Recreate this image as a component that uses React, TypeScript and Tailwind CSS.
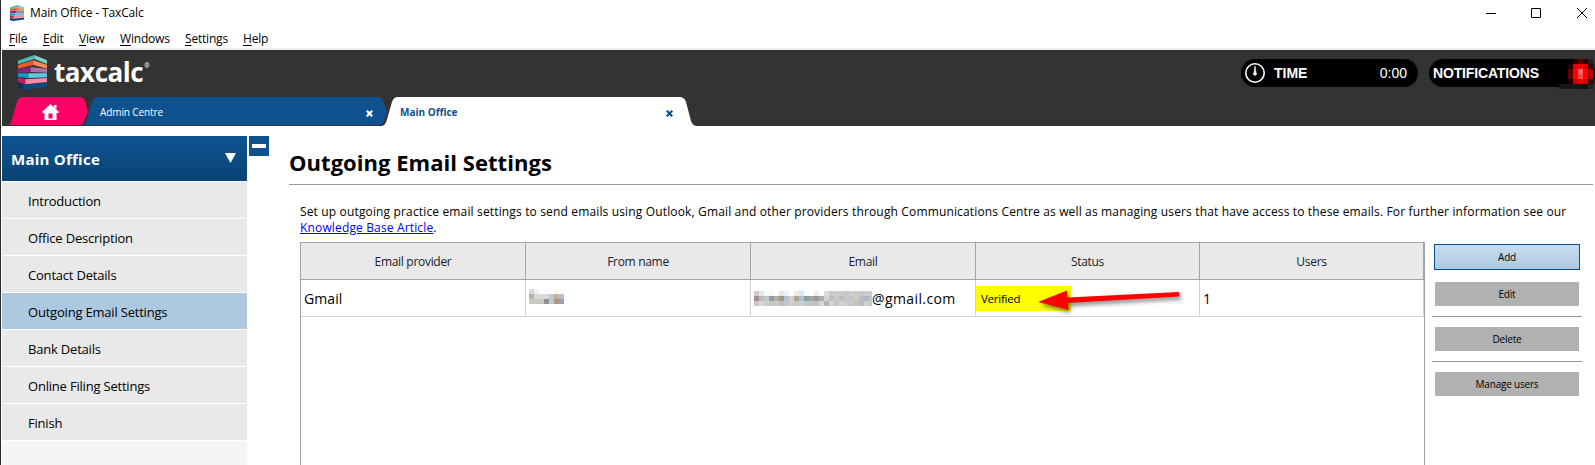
import clsx from "clsx";

const menuItems = [
  { label: "File", className: "w-[34px]" },
  { label: "Edit", className: "w-[36px]" },
  { label: "View", className: "w-[41px]" },
  { label: "Windows", className: "w-[65px]" },
  { label: "Settings", className: "w-[58px]" },
  { label: "Help", className: "w-[40px]" },
];

const sidebarItems = [
  "Introduction",
  "Office Description",
  "Contact Details",
  "Outgoing Email Settings",
  "Bank Details",
  "Online Filing Settings",
  "Finish",
];

const columns = ["Email provider", "From name", "Email", "Status", "Users"];

// each string is one row of 5px squares, colours separated by spaces
const nameMosaic = [
  "#dcdad6 #eef0f4 #ffffff #ffffff #ffffff #f8f6f2 #f8fbff #ffffff",
  "#b4b2a8 #d8d8d4 #dcdae0 #d8dade #c4cacc #c2b2a2 #b4c2d0 #ffffff",
  "#cbcbc5 #c8c8c4 #d2c4c2 #87929a #c8c6c0 #ae9686 #97a3b3 #f8fcff",
];

const emailMosaic = [
  "#d6c8ca #dde9f0 #fafafa #f8fafa #ffffff #f0e2dc #e4f2fc #ffffff #f6e8da #d4e8f6 #fafafa #ffffff #eeeeee #ffffff #d8dce0 #c9c9cb #d0ccc8 #c8cacc #c6c4c4 #d0cec8 #c8ccce #cac6c6 #cccccc #c8cacc",
  "#a88c90 #b4bebc #c6c8ca #929aa0 #b0aea8 #a89482 #b0c0cc #d8ccc8 #a8a898 #b0c0cc #8e9ca4 #a8a6a8 #9a9a98 #b0a8a0 #d4d4d4 #c4c0bc #c6c8cc #c0bcb8 #c8c4c8 #c0c4c8 #ccc8c4 #b8bcc4 #a8b8c8 #c4c8cc",
  "#d0c4c4 #d8d8d4 #cccfcd #c4c4c0 #c8c8ca #c4beb8 #c0c8cc #d8ccca #c8c8c0 #ccd0d4 #c0c8cc #c4c4c8 #c0c0c0 #d8d4d0 #b4b4b4 #d0d4d8 #c8c4c0 #d4d0cc #c8ccd0 #ccc8c4 #c4c0bc #b8bcc0 #d0d0cc #c4c8cc",
];

const lampMosaic = [
  "#000000 #2b0000 #5c0000 #2b0000 #202020 #333333",
  "#1c0000 #e80000 #f40000 #e80000 #3a0000 #222222",
  "#5a0000 #ff0000 #ff6666 #ff0000 #b80000 #000000",
  "#600000 #ff0000 #f84848 #ff0000 #b00000 #000000",
  "#200000 #d00000 #f00000 #d00000 #400000 #222222",
  "#171717 #171717 #171717 #101010 #222222 #333333",
];

const Mosaic = ({ rows }: { rows: string[] }) => (
  <svg
    width={rows[0].split(" ").length * 5}
    height={rows.length * 5}
    shapeRendering="crispEdges"
    className="shrink-0"
  >
    {rows.map((row, y) =>
      row.split(" ").map((fill, x) => <rect key={`${x}-${y}`} x={x * 5} y={y * 5} width={5} height={5} fill={fill} />)
    )}
  </svg>
);

const Logo = ({ className }: { className?: string }) => (
  <svg viewBox="0 0 87 105" preserveAspectRatio="none" className={className}>
    <path d="M0 17 49 0 87 16V95L16 105 0 98Z" fill="#333" fillOpacity=".35" />
    <path d="M0 17 49 0V12L0 28Z" fill="#4cbcb4" />
    <path d="M49 0 87 16V27L49 12Z" fill="#7fd3ca" />
    <path d="M0 30 46 16V30L0 41Z" fill="#f0592b" />
    <path d="M46 16 87 29V41L46 30Z" fill="#f58a5b" />
    <path d="M0 43 38 36V51L0 53Z" fill="#8a2180" />
    <path d="M38 36 87 42V53L38 51Z" fill="#b070ac" />
    <path d="M0 55 31 55V69L0 66Z" fill="#0d9bc9" />
    <path d="M31 55 87 55V67L31 69Z" fill="#5fc6e4" />
    <path d="M0 68 22 73V88L0 80Z" fill="#c8185f" />
    <path d="M22 73 87 69V81L22 88Z" fill="#f28ba5" />
    <path d="M0 82 16 90V105L0 98Z" fill="#10305c" />
    <path d="M16 90 87 83V95L16 105Z" fill="#0c4a80" />
  </svg>
);

const WindowControls = () => (
  <svg width="103" height="12" fill="none" stroke="#000" className="mr-[6px]">
    <path d="M0 6.5H10M45.5 1.5H54.5V10.5H45.5Z" />
    <path d="M91 1 101 11M101 1 91 11" />
  </svg>
);

const TitleBar = () => (
  <div className="flex h-[25px] items-center pl-2">
    <Logo className="h-4 w-[14px]" />
    <span className="ml-[6px] text-[12px] tracking-[-0.14px]">Main Office - TaxCalc</span>
    <div className="flex-1" />
    <WindowControls />
  </div>
);

const MenuBar = () => (
  <div className="flex h-[25px] items-center border-b-2 border-[#f0f0f0] pl-[7px] pt-[4px] text-[12px] tracking-[-0.2px]">
    {menuItems.map(({ label, className }) => (
      <span key={label} className={clsx("whitespace-nowrap", className)}>
        <span className="underline underline-offset-2">{label[0]}</span>
        {label.slice(1)}
      </span>
    ))}
  </div>
);

const CloseIcon = () => (
  <svg width="7" height="7" stroke="currentColor" strokeWidth="2.2" className="shrink-0">
    <path d="M0.7 0.7 6.3 6.3M6.3 0.7 0.7 6.3" />
  </svg>
);

const Tabs = () => (
  <div className="flex h-[29px] pl-2 text-[10px]">
    <div className="relative h-7 w-[77px]">
      <svg width="80" height="28" className="absolute left-[-2px] top-0">
        <path
          d="M0 28C2 27.500 3 26 3.500 24L9 5C10 1.500 12 0 15 0H71C75 0 76.500 2 77.500 5L80 15 76.500 24C75.500 27 73 28 70 28Z"
          fill="#ff0066"
        />
        <path
          d="M42.500 7 51 15 49.500 16.500 48.500 15.700V23H36.500V15.700L35.500 16.500 34 15ZM46 8H48.500V12L46 10Z"
          fill="#fff"
        />
        <path d="M40.500 16.500H44.500V21.500H40.500Z" fill="#ff0066" />
      </svg>
    </div>
    <div className="relative flex h-7 w-[299px] items-center text-white">
      <svg width="305" height="28" className="absolute left-[-5px] top-0">
        <path
          d="M0 28C3 27 4 25 5 22L10 5C11 1.500 13 0 16 0H295C299 0 300.500 2 301.500 5L305 15 302 24C301 27 299 28 296 28Z"
          fill="#0d518e"
        />
      </svg>
      <span className="relative ml-[13px] flex-1 pt-[3px] tracking-[-0.1px]">Admin Centre</span>
      <span className="relative mr-[13px] pt-[5px]">
        <CloseIcon />
      </span>
    </div>
    <div className="relative flex h-[29px] w-[311px] items-center font-bold text-[#0d518e]">
      <svg width="319" height="29" className="absolute left-[-6px] top-0">
        <path
          d="M0 29C4 29 5.500 27 6.500 24L12 5C13 1.500 15 0 18 0H299C303 0 305 2 306 5L311 24C312 27 314 29 318 29Z"
          fill="#fff"
        />
      </svg>
      <span className="relative ml-[14px] flex-1 pt-[2px]">Main Office</span>
      <span className="relative mr-[24px] pt-[4px]">
        <CloseIcon />
      </span>
    </div>
  </div>
);

const Header = () => (
  <header className="flex h-[76px] flex-col justify-between bg-[#333333]">
    <div className="flex h-[47px] text-white">
      <div className="flex pl-4 pt-[5px]">
        <Logo className="h-[35px] w-[29px]" />
        <span className="ml-[7px] mt-[2px] w-[90px] text-[26px] font-bold leading-[30px] tracking-[-0.45px]">
          taxcalc
        </span>
        <span className="mt-[7px] text-[7px] leading-[8px]">®</span>
      </div>
      <div className="flex-1" />
      <div className="flex pt-[9px] font-['Liberation_Sans',sans-serif] text-[14px] leading-7">
        <div className="flex h-7 w-[177px] items-center rounded-full bg-black pl-1">
          <svg width="20" height="20" fill="none" stroke="#fff">
            <circle cx="10" cy="10" r="9.200" strokeWidth="1.600" />
            <path d="M10 3 11 9.500A1.600 1.600 0 1 1 9 9.500Z" fill="#fff" strokeWidth=".6" />
          </svg>
          <span className="ml-[9px] flex-1 font-bold">TIME</span>
          <span className="mr-[11px]">0:00</span>
        </div>
        <div className="ml-[11px] flex h-7 w-[166px] rounded-l-full bg-black pl-1">
          <span className="w-[134px] shrink-0 font-bold tracking-[-0.15px]">NOTIFICATIONS</span>
          <div className="-ml-2 mt-[25px] h-[5px] w-[9px] shrink-0 bg-[#171717]" />
          <Mosaic rows={lampMosaic} />
        </div>
      </div>
    </div>
    <Tabs />
  </header>
);

const Sidebar = () => (
  <aside className="w-[245px] bg-[#f5f5f5]">
    <div className="flex h-[45px] items-center justify-between bg-gradient-to-b from-[#0d5392] to-[#0a4374] pl-[9px] pr-[11px] text-[15px] font-bold text-white">
      <span className="pt-[2px] tracking-[0.25px]">Main Office</span>
      <svg width="11" height="10" className="mb-[2px]">
        <path d="M0 0H11L5.500 10Z" fill="#fff" />
      </svg>
    </div>
    {sidebarItems.map((item, i) => (
      <div
        key={item}
        className={clsx(
          "flex h-[37px] items-center border-t border-white pl-[26px] pt-[3px] text-[13px] tracking-[-0.2px]",
          i === 3 ? "bg-[#adc9e0]" : "bg-[#e9e9e9]"
        )}
      >
        {item}
      </div>
    ))}
    <div className="h-px bg-white" />
  </aside>
);

const EmailTable = () => (
  <div className="w-[1125px] border border-b-0 border-[#a0a6ab]">
    <div className="flex border-b border-[#a0a6ab] bg-[#e9e9e9]">
      {columns.map((column, i) => (
        <div
          key={column}
          className={clsx(
            "flex h-9 items-center justify-center border-r border-[#a0a6ab] pt-[2px] text-[12px] tracking-[-0.3px] text-[#1a1a2a]",
            i > 2 ? "w-[224px]" : "w-[225px]"
          )}
        >
          {column}
        </div>
      ))}
    </div>
    <div className="flex h-[37px] w-[1123px] border-b border-[#d3d3d3] text-[14px] [&>div]:flex [&>div]:items-center [&>div]:border-r [&>div]:border-[#d3d3d3]">
      <div className="w-[225px] pl-[3px] tracking-[0.1px]">Gmail</div>
      <div className="w-[225px] pb-[3px] pl-[3px]">
        <Mosaic rows={nameMosaic} />
      </div>
      <div className="w-[225px] pl-[3px]">
        <div className="flex w-[118px] overflow-hidden pt-px">
          <Mosaic rows={emailMosaic} />
        </div>
        <span className="tracking-[0.4px]">@gmail.com</span>
      </div>
      <div className="relative w-[224px]">
        <span className="flex h-[25px] w-[95px] items-center bg-[#ffff00] pl-[5px] pt-[2px] text-[11.5px] tracking-[-0.25px]">
          Verified
        </span>
        <svg
          width="160"
          height="36"
          className="absolute left-[54px] top-[3px] drop-shadow-[2px_3px_2px_rgba(0,0,0,0.45)]"
        >
          <path d="M8 19 37 7.500 37.500 14.500 149 9 149.500 13.500 38 20 38.500 27Z" fill="#ff0000" />
        </svg>
      </div>
      <div className="w-[224px] pl-[3px]">1</div>
    </div>
  </div>
);

const ActionButton = ({ label }: { label: string }) => (
  <button className="mx-[3px] flex h-6 items-center justify-center bg-[#b1b1b1] pt-px">{label}</button>
);

const Actions = () => (
  <div className="ml-[7px] flex w-[150px] flex-col pt-[2px] text-[10px] tracking-[-0.2px]">
    <button className="mx-[2px] mb-3 flex h-[26px] items-center justify-center border border-[#0a5090] bg-gradient-to-b from-[#c8dcef] to-[#adc9e0] pt-px">
      Add
    </button>
    <ActionButton label="Edit" />
    <hr className="my-[10px] border-[#999999]" />
    <ActionButton label="Delete" />
    <hr className="my-[10px] border-[#999999]" />
    <ActionButton label="Manage users" />
  </div>
);

const App = () => {
  return (
    <div className="flex h-[465px] w-[1595px] flex-col overflow-hidden border-l border-[#2b2b2b] bg-white pl-px font-['Open_Sans','Noto_Sans',sans-serif] text-black">
      <TitleBar />
      <MenuBar />
      <Header />
      <div className="flex flex-1 pt-[10px]">
        <Sidebar />
        <div className="ml-[2px] flex h-5 w-5 justify-center bg-[#0d518e] pt-2">
          <div className="h-1 w-[14px] bg-white" />
        </div>
        <main className="ml-5 flex flex-1 flex-col">
          <h1 className="mr-[2px] h-[49px] border-b border-[#999999] pt-[9px] text-[22px] font-bold leading-[34px] tracking-[0.04px]">
            Outgoing Email Settings
          </h1>
          <p className="ml-[11px] mt-[19px] h-[38px] whitespace-nowrap text-[12px] leading-4 tracking-[0.15px]">
            Set up outgoing practice email settings to send emails using Outlook, Gmail and other providers through
            Communications Centre as well as managing users that have access to these emails. For further information
            see our
            <br />
            <a className="text-[#0000ff] underline">Knowledge Base Article</a>.
          </p>
          <div className="ml-[11px] flex flex-1">
            <EmailTable />
            <Actions />
          </div>
        </main>
      </div>
    </div>
  );
};

export default App;
